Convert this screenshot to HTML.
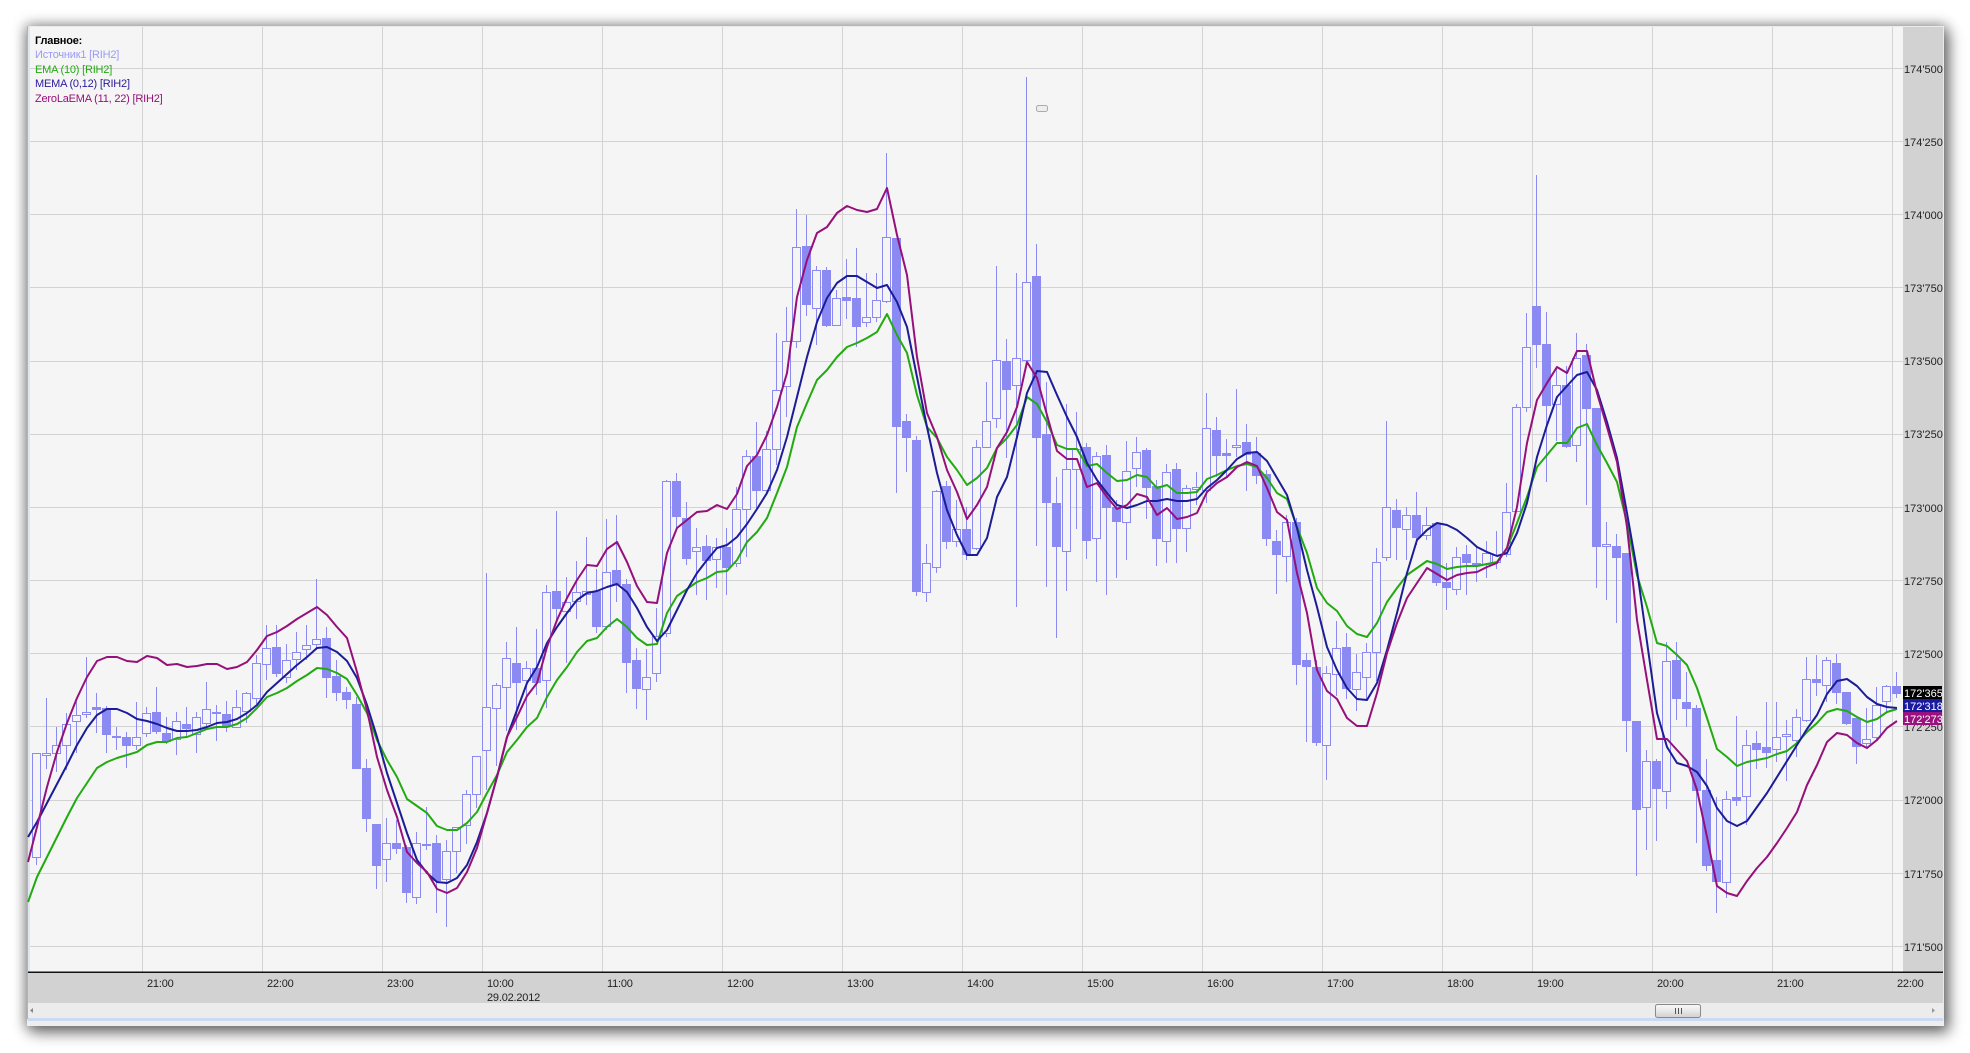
<!DOCTYPE html>
<html lang="ru"><head><meta charset="utf-8"><title>Chart</title>
<style>
html,body{margin:0;padding:0;width:1970px;height:1053px;overflow:hidden;background:#fff}
#w{position:absolute;left:27px;top:26px;width:1917px;height:1000px;background:#eaeaea;box-shadow:0 0 12px 2px rgba(0,0,0,.34),4px 6px 14px 1px rgba(0,0,0,.46)}
svg{position:absolute;left:0;top:0}
text{font-family:"Liberation Sans","Noto Sans CJK SC",sans-serif;font-size:11px;fill:#222}
</style></head><body>
<div id="w"></div>
<svg width="1970" height="1053" viewBox="0 0 1970 1053">
<rect x="27" y="26" width="3" height="993" fill="#dfe6ef"/>
<rect x="27" y="26" width="1" height="993" fill="#aab4c2"/>
<rect x="30" y="27" width="1873" height="945" fill="#f5f5f5"/>
<rect x="1903" y="27" width="40" height="945" fill="#d2d2d2"/>
<rect x="28" y="973" width="1915" height="30" fill="#d2d2d2"/>
<rect x="28" y="1003" width="1915" height="15" fill="#ececec"/>
<rect x="28" y="1018" width="1915" height="3" fill="#cbdaf0"/>
<rect x="27" y="1021" width="1917" height="5" fill="#eeeeee"/>
<g shape-rendering="crispEdges" stroke="#d3d3d3" stroke-width="1" fill="none">
<path d="M30 68.5H1903M30 141.5H1903M30 214.5H1903M30 287.5H1903M30 361.5H1903M30 434.5H1903M30 507.5H1903M30 580.5H1903M30 653.5H1903M30 726.5H1903M30 800.5H1903M30 873.5H1903M30 946.5H1903"/>
<path d="M142.5 27V972M262.5 27V972M382.5 27V972M482.5 27V972M602.5 27V972M722.5 27V972M842.5 27V972M962.5 27V972M1082.5 27V972M1202.5 27V972M1322.5 27V972M1442.5 27V972M1532.5 27V972M1652.5 27V972M1772.5 27V972M1892.5 27V972"/>
</g>
<g shape-rendering="crispEdges" stroke="#8a8af2" stroke-width="1" fill="none">
<path d="M36.5 753V865M46.5 698V769M56.5 727V772M66.5 713V770M76.5 702V753M86.5 657V718M96.5 693V733M106.5 706V753M116.5 727V750M126.5 732V768M136.5 702V750M146.5 707V737M156.5 687V734M166.5 717V744M176.5 712V755M186.5 707V738M196.5 712V753M206.5 682V727M216.5 705V741M226.5 701V732M236.5 690V727M246.5 692V723M256.5 655V704M266.5 625V680M276.5 625V677M286.5 644V683M296.5 632V670M306.5 625V660M316.5 579V650M326.5 627V698M336.5 660V701M346.5 687V709M356.5 697V769M366.5 759V832M376.5 824V889M386.5 818V882M396.5 820V854M406.5 845V903M416.5 832V904M426.5 807V850M436.5 835V913M446.5 840V927M456.5 827V873M466.5 790V844M476.5 756V808M486.5 573V790M496.5 683V766"/>
<path d="M506.5 642V731M516.5 627V730M526.5 661V725M536.5 629V695M546.5 585V708M556.5 511V620M566.5 577V663M576.5 561V619M586.5 537V605M596.5 569V633M606.5 519V630M616.5 515V602M626.5 579V693M636.5 648V709M646.5 649V720M656.5 608V682M666.5 480V637M676.5 473V530M686.5 502V565M696.5 528V595M706.5 535V600M716.5 538V588M726.5 528V595M736.5 487V567M746.5 450V557M756.5 422V510M766.5 431V495M776.5 333V465M786.5 307V417M796.5 209V348M806.5 215V316M816.5 266V345M826.5 267V327M836.5 290V326M846.5 259V319M856.5 248V347M866.5 273V327M876.5 273V322M886.5 153V303M896.5 238V493M906.5 414V472M916.5 436V596M926.5 544V602M936.5 490V573M946.5 481V549M956.5 500V547M966.5 507V560M976.5 440V550M986.5 382V448M996.5 266V428"/>
<path d="M1006.5 339V458M1016.5 273V607M1026.5 77V365M1036.5 244V546M1046.5 382V587M1056.5 477V638M1066.5 404V591M1076.5 412V529M1086.5 443V559M1096.5 452V582M1106.5 445V595M1116.5 500V578M1126.5 441V560M1136.5 437V487M1146.5 448V519M1156.5 480V566M1166.5 464V563M1176.5 463V563M1186.5 485V552M1196.5 472V505M1206.5 393V503M1216.5 417V477M1226.5 439V477M1236.5 389V457M1246.5 424V491M1256.5 437V484M1266.5 470V546M1276.5 530V594M1286.5 515V582M1296.5 518V685M1306.5 653V742M1316.5 660V746M1326.5 666V780M1336.5 621V696M1346.5 633V699M1356.5 654V711M1366.5 643V700M1376.5 548V681M1386.5 421V561M1396.5 499V560M1406.5 507V560M1416.5 492V545M1426.5 507V540M1436.5 523V586M1446.5 563V610M1456.5 547V595M1466.5 545V595M1476.5 547V582M1486.5 541V578M1496.5 531V569"/>
<path d="M1506.5 483V557M1516.5 404V512M1526.5 313V412M1536.5 175V368M1546.5 312V482M1556.5 367V441M1566.5 366V448M1576.5 333V462M1586.5 344V505M1596.5 408V588M1606.5 522V600M1616.5 534V623M1626.5 553V752M1636.5 721V876M1646.5 750V850M1656.5 759V841M1666.5 642V809M1676.5 642V720M1686.5 672V727M1696.5 705V843M1706.5 759V871M1716.5 797V913M1726.5 791V898M1736.5 716V806M1746.5 730V825M1756.5 731V769M1766.5 702V768M1776.5 702V762M1786.5 720V781M1796.5 709V757M1806.5 657V722M1816.5 655V696M1826.5 657V702M1836.5 654V704M1846.5 692V725M1856.5 718V764M1866.5 708V747M1876.5 687V740M1886.5 685V712M1896.5 672V698"/>
</g>
<path shape-rendering="crispEdges" fill="#8a8af2" d="M92 707h9V710h-9zM102 708h9V735h-9zM112 736h9V738h-9zM122 737h9V746h-9zM152 712h9V732h-9zM162 733h9V742h-9zM182 724h9V729h-9zM212 712h9V714h-9zM222 714h9V727h-9zM272 647h9V674h-9zM322 638h9V678h-9zM332 676h9V693h-9zM342 692h9V700h-9zM352 704h9V769h-9zM362 768h9V819h-9zM372 824h9V866h-9zM392 843h9V849h-9zM402 847h9V893h-9zM422 844h9V846h-9zM432 843h9V881h-9zM512 663h9V683h-9zM532 668h9V683h-9zM552 591h9V609h-9zM592 591h9V627h-9zM612 570h9V585h-9zM622 584h9V663h-9zM632 660h9V689h-9zM672 481h9V517h-9zM682 518h9V559h-9zM702 546h9V561h-9zM722 547h9V568h-9zM752 456h9V491h-9zM802 246h9V305h-9zM822 270h9V326h-9zM842 297h9V301h-9zM852 298h9V327h-9zM892 238h9V427h-9zM902 421h9V438h-9zM912 440h9V592h-9zM942 486h9V542h-9zM962 529h9V555h-9zM1002 361h9V390h-9zM1032 276h9V438h-9zM1042 434h9V503h-9zM1052 503h9V547h-9zM1082 447h9V541h-9zM1102 455h9V508h-9zM1112 507h9V522h-9zM1142 450h9V488h-9zM1152 486h9V539h-9zM1172 469h9V529h-9zM1212 430h9V456h-9zM1222 453h9V456h-9zM1242 442h9V455h-9zM1252 453h9V476h-9zM1262 474h9V539h-9zM1272 541h9V555h-9zM1292 522h9V665h-9zM1302 660h9V667h-9zM1312 667h9V743h-9zM1342 647h9V689h-9zM1392 510h9V528h-9zM1412 515h9V538h-9zM1432 523h9V583h-9zM1442 582h9V588h-9zM1462 554h9V563h-9zM1472 563h9V565h-9zM1532 306h9V345h-9zM1542 344h9V406h-9zM1562 385h9V447h-9zM1582 355h9V409h-9zM1592 408h9V547h-9zM1612 546h9V558h-9zM1622 553h9V721h-9zM1632 721h9V810h-9zM1652 761h9V789h-9zM1672 660h9V699h-9zM1682 702h9V709h-9zM1692 708h9V791h-9zM1702 790h9V866h-9zM1712 860h9V882h-9zM1732 797h9V801h-9zM1752 743h9V750h-9zM1762 747h9V753h-9zM1812 679h9V683h-9zM1832 663h9V693h-9zM1842 692h9V724h-9zM1852 718h9V747h-9zM1892 686h9V694h-9z"/>
<path shape-rendering="crispEdges" fill="#f5f5f5" stroke="#8a8af2" stroke-width="1" d="M32.5 753.5h8V857.5h-8zM42.5 753.5h8V755.5h-8zM52.5 745.5h8V753.5h-8zM62.5 724.5h8V745.5h-8zM72.5 715.5h8V721.5h-8zM82.5 712.5h8V714.5h-8zM132.5 737.5h8V745.5h-8zM142.5 713.5h8V733.5h-8zM172.5 721.5h8V739.5h-8zM192.5 717.5h8V734.5h-8zM202.5 709.5h8V723.5h-8zM232.5 707.5h8V727.5h-8zM242.5 693.5h8V711.5h-8zM252.5 663.5h8V698.5h-8zM262.5 648.5h8V664.5h-8zM282.5 660.5h8V677.5h-8zM292.5 652.5h8V659.5h-8zM302.5 645.5h8V649.5h-8zM312.5 639.5h8V644.5h-8zM382.5 843.5h8V859.5h-8zM412.5 843.5h8V897.5h-8zM442.5 851.5h8V879.5h-8zM452.5 827.5h8V851.5h-8zM462.5 794.5h8V825.5h-8zM472.5 756.5h8V794.5h-8zM482.5 707.5h8V750.5h-8zM492.5 685.5h8V708.5h-8zM502.5 658.5h8V687.5h-8zM522.5 668.5h8V680.5h-8zM542.5 592.5h8V680.5h-8zM562.5 602.5h8V611.5h-8zM572.5 592.5h8V601.5h-8zM582.5 591.5h8V594.5h-8zM602.5 572.5h8V626.5h-8zM642.5 677.5h8V689.5h-8zM652.5 636.5h8V673.5h-8zM662.5 481.5h8V633.5h-8zM692.5 547.5h8V551.5h-8zM712.5 547.5h8V559.5h-8zM732.5 509.5h8V563.5h-8zM742.5 456.5h8V509.5h-8zM762.5 449.5h8V490.5h-8zM772.5 390.5h8V449.5h-8zM782.5 341.5h8V386.5h-8zM792.5 247.5h8V341.5h-8zM812.5 270.5h8V308.5h-8zM832.5 298.5h8V325.5h-8zM862.5 317.5h8V322.5h-8zM872.5 300.5h8V317.5h-8zM882.5 237.5h8V301.5h-8zM922.5 563.5h8V592.5h-8zM932.5 491.5h8V567.5h-8zM952.5 529.5h8V541.5h-8zM972.5 447.5h8V548.5h-8zM982.5 421.5h8V447.5h-8zM992.5 360.5h8V418.5h-8zM1012.5 358.5h8V385.5h-8zM1022.5 282.5h8V360.5h-8zM1062.5 469.5h8V551.5h-8zM1072.5 449.5h8V469.5h-8zM1092.5 456.5h8V538.5h-8zM1122.5 471.5h8V522.5h-8zM1132.5 452.5h8V468.5h-8zM1162.5 472.5h8V541.5h-8zM1182.5 488.5h8V528.5h-8zM1192.5 487.5h8V489.5h-8zM1202.5 428.5h8V490.5h-8zM1232.5 445.5h8V447.5h-8zM1282.5 522.5h8V556.5h-8zM1322.5 673.5h8V745.5h-8zM1332.5 648.5h8V674.5h-8zM1352.5 672.5h8V689.5h-8zM1362.5 652.5h8V677.5h-8zM1372.5 562.5h8V652.5h-8zM1382.5 507.5h8V557.5h-8zM1402.5 515.5h8V529.5h-8zM1422.5 525.5h8V535.5h-8zM1452.5 557.5h8V589.5h-8zM1482.5 553.5h8V564.5h-8zM1492.5 555.5h8V562.5h-8zM1502.5 512.5h8V554.5h-8zM1512.5 407.5h8V511.5h-8zM1522.5 347.5h8V407.5h-8zM1552.5 385.5h8V404.5h-8zM1572.5 358.5h8V445.5h-8zM1602.5 544.5h8V546.5h-8zM1642.5 761.5h8V807.5h-8zM1662.5 661.5h8V791.5h-8zM1722.5 799.5h8V882.5h-8zM1742.5 745.5h8V796.5h-8zM1772.5 737.5h8V749.5h-8zM1782.5 734.5h8V736.5h-8zM1792.5 717.5h8V740.5h-8zM1802.5 679.5h8V720.5h-8zM1822.5 660.5h8V685.5h-8zM1862.5 739.5h8V743.5h-8zM1872.5 705.5h8V737.5h-8zM1882.5 686.5h8V701.5h-8z"/>
<rect x="1036.5" y="105.5" width="11" height="6" rx="2" fill="#eeeeee" stroke="#aaaaaa"/>
<g fill="none" stroke-width="2" stroke-linejoin="round">
<polyline stroke="#22aa11" points="28,902 37,877 47,857 57,837 67,817 77,798 87,783 97,768 107,762 117,758 127,755 137,752 147,745 157,742 167,742 177,738 187,737 197,733 207,729 217,727 227,727 237,724 247,718 257,708 267,697 277,693 287,688 297,681 307,675 317,668 327,669 337,673 347,679 357,695 367,713 377,740 387,760 397,777 407,799 417,806 427,813 437,826 447,830 457,830 467,823 477,812 487,793 497,775 507,752 517,740 527,727 537,718 547,697 557,680 567,667 577,652 587,641 597,638 607,627 617,619 627,627 637,638 647,645 657,644 667,613 677,596 687,589 697,582 707,578 717,572 727,571 737,560 747,542 757,532 767,518 777,493 787,467 797,427 807,403 817,380 827,370 837,357 847,347 857,343 867,338 877,332 887,314 897,335 907,353 917,395 927,427 937,438 947,457 957,470 967,485 977,478 987,468 997,448 1007,438 1017,425 1027,397 1037,404 1047,422 1057,445 1067,449 1077,449 1087,466 1097,464 1107,473 1117,481 1127,480 1137,475 1147,477 1157,488 1167,485 1177,493 1187,493 1197,492 1207,479 1217,475 1227,470 1237,466 1247,464 1257,467 1267,478 1277,493 1287,499 1297,527 1307,553 1317,588 1327,603 1337,611 1347,626 1357,634 1367,637 1377,623 1387,602 1397,588 1407,575 1417,568 1427,561 1437,564 1447,569 1457,567 1467,566 1477,566 1487,564 1497,562 1507,548 1517,523 1527,497 1537,467 1547,455 1557,443 1567,443 1577,428 1587,424 1597,445 1607,463 1617,482 1627,523 1637,575 1647,607 1657,643 1667,646 1677,655 1687,665 1697,688 1707,718 1717,749 1727,757 1737,766 1747,762 1757,760 1767,758 1777,754 1787,751 1797,743 1807,732 1817,723 1827,712 1837,709 1847,711 1857,717 1867,722 1877,719 1887,712 1897,709"/>
<polyline stroke="#1c1c96" points="28,837 37,822 47,803 57,784 67,765 77,745 87,728 97,715 107,709 117,709 127,713 137,719 147,721 157,724 167,728 177,731 187,731 197,730 207,727 217,723 227,722 237,719 247,713 257,705 267,692 277,683 287,674 297,665 307,657 317,648 327,647 337,652 347,661 357,678 367,705 377,737 387,773 397,803 407,833 417,860 427,873 437,882 447,883 457,878 467,865 477,842 487,813 497,777 507,737 517,710 527,683 537,667 547,643 557,627 567,613 577,600 587,593 597,591 607,587 617,584 627,592 637,608 647,627 657,641 667,630 677,610 687,590 697,573 707,560 717,548 727,545 737,537 747,524 757,509 767,493 777,470 787,437 797,397 807,357 817,322 827,298 837,283 847,276 857,276 867,282 877,288 887,285 897,302 907,327 917,377 927,427 937,473 947,510 957,535 967,555 977,555 987,538 997,497 1007,477 1017,437 1027,393 1037,371 1047,372 1057,395 1067,417 1077,437 1087,463 1097,480 1107,493 1117,505 1127,508 1137,505 1147,501 1157,501 1167,499 1177,501 1187,501 1197,499 1207,488 1217,480 1227,470 1237,459 1247,453 1257,452 1267,461 1277,478 1287,495 1297,528 1307,570 1317,607 1327,647 1337,670 1347,688 1357,699 1367,700 1377,683 1387,650 1397,613 1407,573 1417,540 1427,530 1437,523 1447,525 1457,530 1467,538 1477,547 1487,552 1497,556 1507,553 1517,533 1527,503 1537,457 1547,425 1557,397 1567,386 1577,375 1587,372 1597,390 1607,422 1617,458 1627,513 1637,570 1647,642 1657,713 1667,747 1677,763 1687,766 1697,772 1707,786 1717,808 1727,821 1737,826 1747,821 1757,807 1767,793 1777,777 1787,761 1797,745 1807,729 1817,715 1827,694 1837,681 1847,679 1857,686 1867,697 1877,704 1887,707 1897,708"/>
<polyline stroke="#96107a" points="28,862 37,827 47,787 57,752 67,723 77,698 87,677 97,661 107,657 117,657 127,661 137,662 147,656 157,658 167,665 177,664 187,667 197,666 207,664 217,664 227,669 237,667 247,662 257,650 267,636 277,632 287,626 297,619 307,613 317,607 327,615 337,627 347,638 357,672 367,710 377,757 387,790 397,817 407,852 417,863 427,872 437,889 447,893 457,888 467,872 477,848 487,813 497,777 507,737 517,717 527,696 537,683 547,647 557,620 567,598 577,580 587,565 597,566 607,549 617,542 627,562 637,586 647,602 657,603 667,553 677,528 687,520 697,512 707,511 717,505 727,509 737,494 747,466 757,455 767,435 777,407 787,373 797,297 807,260 817,233 827,227 837,213 847,206 857,210 867,212 877,209 887,188 897,235 907,275 917,357 927,413 937,437 947,470 957,492 967,519 977,505 987,487 997,448 1007,432 1017,407 1027,362 1037,378 1047,415 1057,451 1067,459 1077,459 1087,487 1097,483 1107,497 1117,509 1127,505 1137,494 1147,497 1157,515 1167,508 1177,519 1187,517 1197,513 1207,492 1217,483 1227,477 1237,467 1247,462 1257,466 1267,488 1277,512 1287,520 1297,573 1307,613 1317,670 1327,691 1337,699 1347,718 1357,726 1367,726 1377,693 1387,653 1397,623 1407,598 1417,583 1427,568 1437,574 1447,580 1457,575 1467,573 1477,572 1487,567 1497,563 1507,548 1517,507 1527,443 1537,400 1547,383 1557,367 1567,373 1577,351 1587,351 1597,393 1607,427 1617,462 1627,527 1637,620 1647,680 1657,739 1667,739 1677,750 1687,761 1697,790 1707,837 1717,886 1727,893 1737,896 1747,881 1757,868 1767,857 1777,843 1787,828 1797,812 1807,785 1817,765 1827,742 1837,733 1847,735 1857,743 1867,748 1877,740 1887,728 1897,721"/>
</g>
<rect x="28" y="971.5" width="1915" height="1.5" fill="#111"/>
<g>
<text x="1904" y="73">174'500</text><text x="1904" y="146">174'250</text><text x="1904" y="219">174'000</text><text x="1904" y="292">173'750</text><text x="1904" y="365">173'500</text><text x="1904" y="438">173'250</text><text x="1904" y="512">173'000</text><text x="1904" y="585">172'750</text><text x="1904" y="658">172'500</text><text x="1904" y="731">172'250</text><text x="1904" y="804">172'000</text><text x="1904" y="878">171'750</text><text x="1904" y="951">171'500</text>
</g>
<rect x="1903" y="686" width="39" height="13" fill="#000"/>
<rect x="1903" y="699" width="39" height="13" fill="#1a1a9e"/>
<rect x="1903" y="712" width="39" height="13" fill="#99127f"/>
<g>
<text x="1904" y="697" style="fill:#fff">172'365</text><text x="1904" y="710" style="fill:#fff">172'318</text><text x="1904" y="723" style="fill:#fff">172'273</text>
</g>
<g letter-spacing="-.2">
<text x="147" y="987">21:00</text><text x="267" y="987">22:00</text><text x="387" y="987">23:00</text><text x="487" y="987">10:00</text><text x="487" y="1001">29.02.2012</text><text x="607" y="987">11:00</text><text x="727" y="987">12:00</text><text x="847" y="987">13:00</text><text x="967" y="987">14:00</text><text x="1087" y="987">15:00</text><text x="1207" y="987">16:00</text><text x="1327" y="987">17:00</text><text x="1447" y="987">18:00</text><text x="1537" y="987">19:00</text><text x="1657" y="987">20:00</text><text x="1777" y="987">21:00</text><text x="1897" y="987">22:00</text>
</g>
<g letter-spacing="-.2">
<text x="35" y="44" font-weight="bold" style="fill:#000">Главное:</text>
<text x="35" y="58" style="fill:#9a9af5">Источник1 [RIH2]</text>
<text x="35" y="73" style="fill:#22aa11">EMA (10) [RIH2]</text>
<text x="35" y="87" style="fill:#2a1a9a">MEMA (0,12) [RIH2]</text>
<text x="35" y="102" style="fill:#96107a">ZeroLaEMA (11, 22) [RIH2]</text>
</g>
<path d="M33 1008v5l-3-2.500z" fill="#888"/>
<path d="M1932 1008v5l3-2.500z" fill="#999"/>
<defs><linearGradient id="t" x1="0" y1="0" x2="0" y2="1"><stop offset="0" stop-color="#f8f8f8"/><stop offset=".5" stop-color="#e8e8e8"/><stop offset="1" stop-color="#cfcfcf"/></linearGradient></defs>
<rect x="1655.500" y="1004.500" width="45" height="13" rx="2" fill="url(#t)" stroke="#8a8a8a"/>
<path d="M1675.500 1008v6M1678.500 1008v6M1681.500 1008v6" stroke="#555" shape-rendering="crispEdges"/>
</svg>
</body></html>
